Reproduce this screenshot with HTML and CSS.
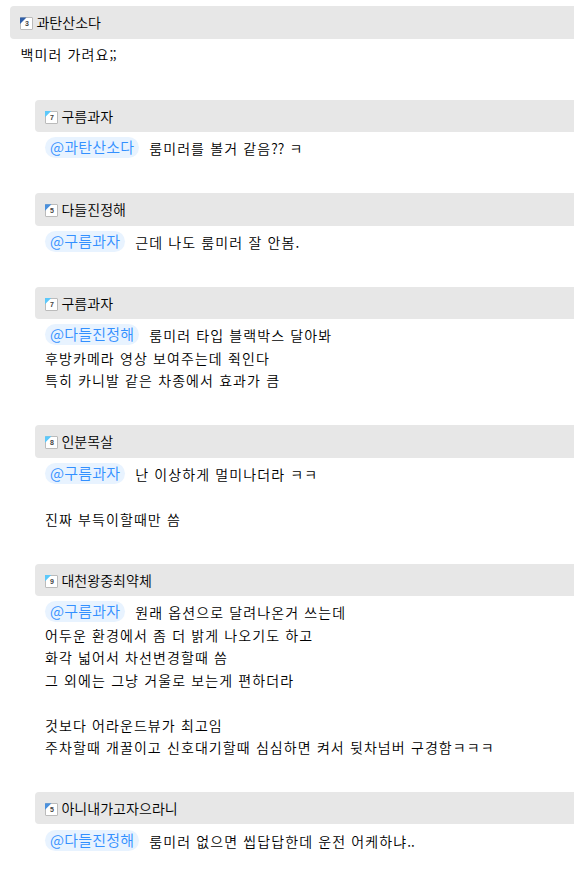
FILE: index.html
```html
<!DOCTYPE html>
<html lang="ko">
<head>
<meta charset="utf-8">
<title>댓글</title>
<link rel="stylesheet" href="styles.css">
</head>
<body>
<main class="comments">
  <article class="comment">
    <header class="head"><span class="level navy">3</span><span class="name">과탄산소다</span></header>
    <div class="body root">백미러 가려요<span class="punct">;;</span></div>
  </article>
  <article class="comment reply">
    <header class="head"><span class="level sky">7</span><span class="name">구름과자</span></header>
    <div class="body"><span class="mention">@과탄산소다</span>룸미러를 볼거 같음<span class="punct">??</span> ㅋ</div>
  </article>
  <article class="comment reply">
    <header class="head"><span class="level blue">5</span><span class="name">다들진정해</span></header>
    <div class="body"><span class="mention">@구름과자</span>근데 나도 룸미러 잘 안봄<span class="punct">.</span></div>
  </article>
  <article class="comment reply">
    <header class="head"><span class="level sky">7</span><span class="name">구름과자</span></header>
    <div class="body"><span class="mention">@다들진정해</span>룸미러 타입 블랙박스 달아봐<br>후방카메라 영상 보여주는데 쥑인다<br>특히 카니발 같은 차종에서 효과가 큼</div>
  </article>
  <article class="comment reply">
    <header class="head"><span class="level sky">8</span><span class="name">인분목살</span></header>
    <div class="body"><span class="mention">@구름과자</span>난 이상하게 멀미나더라 ㅋㅋ<br><br>진짜 부득이할때만 씀</div>
  </article>
  <article class="comment reply">
    <header class="head"><span class="level sky">9</span><span class="name">대천왕중최약체</span></header>
    <div class="body"><span class="mention">@구름과자</span>원래 옵션으로 달려나온거 쓰는데<br>어두운 환경에서 좀 더 밝게 나오기도 하고<br>화각 넓어서 차선변경할때 씀<br>그 외에는 그냥 거울로 보는게 편하더라<br><br>것보다 어라운드뷰가 최고임<br>주차할때 개꿀이고 신호대기할때 심심하면 켜서 뒷차넘버 구경함ㅋㅋㅋ</div>
  </article>
  <article class="comment reply">
    <header class="head"><span class="level blue">5</span><span class="name">아니내가고자으라니</span></header>
    <div class="body"><span class="mention">@다들진정해</span>룸미러 없으면 씹답답한데 운전 어케하냐<span class="punct">..</span></div>
  </article>
</main>
</body>
</html>
```
FILE: styles.css
```css
* { box-sizing: border-box; }
body {
  margin: 0;
  background: #fff;
  color: #000;
  font-family: "Noto Sans CJK KR", sans-serif;
  font-weight: 350;
  overflow: hidden;
}
.comments { padding: 6.2px 0 0 10px; }
.comment { padding-bottom: 33.5px; }
.reply { margin-left: 25px; }
.head {
  display: flex;
  align-items: center;
  height: 32.4px;
  padding-left: 10px;
  border-radius: 4px 0 0 4px;
  background: #e7e7e7;
}
.level {
  position: relative;
  width: 13px;
  height: 13px;
  margin: 3px 3px 0 0;
  padding-left: 1px;
  border: 1px solid #bbb;
  border-radius: 1px;
  background: #fff;
  color: #444;
  font: bold 7px/12px "Liberation Sans", sans-serif;
  text-align: center;
}
.level::before {
  content: "";
  position: absolute;
  top: -1px;
  left: -1px;
  width: 6.5px;
  height: 6.5px;
  background: currentColor;
  clip-path: polygon(0 0, 100% 0, 0 100%);
}
.navy::before { background: #2f5fa8; }
.blue::before { background: #4a90dc; }
.sky::before { background: #5cc8fa; }
.name { padding-left: .4px; font-size: 14px; line-height: 20px; letter-spacing: .05px; }
.body {
  padding: 5.1px 0 0 10px;
  font-size: 14px;
  line-height: 22.5px;
  letter-spacing: 1.08px;
  word-spacing: .15px;
  white-space: nowrap;
}
.punct { letter-spacing: 0; }
.root { padding: 4.9px 0 .2px 10.5px; }
.root .punct { letter-spacing: -.4px; }
.mention {
  display: inline-block;
  height: 21px;
  margin-right: 10px;
  padding: 0 5px;
  border-radius: 11px;
  background: #e8f3ff;
  color: #3390ff;
  font-size: 15px;
  letter-spacing: .2px;
  line-height: 20px;
  vertical-align: top;
}
```
